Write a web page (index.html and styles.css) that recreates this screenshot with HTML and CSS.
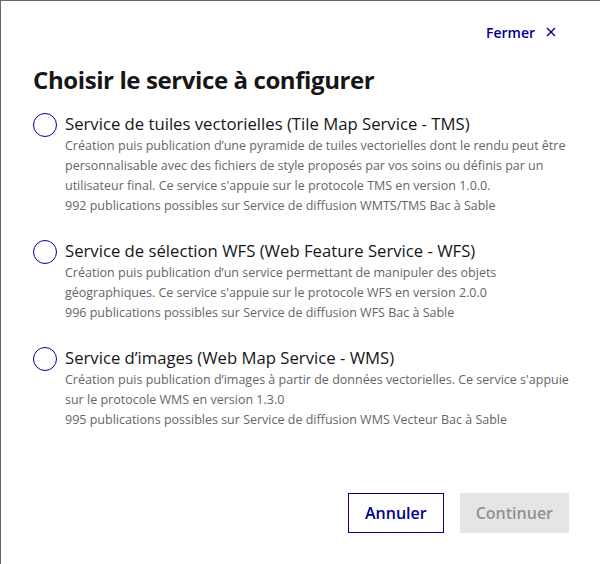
FILE: index.html
```html
<!DOCTYPE html>
<html lang="fr">
<head>
<meta charset="utf-8">
<title>Choisir le service à configurer</title>
<link rel="stylesheet" href="styles.css">
</head>
<body>
<div class="modal">
  <div class="modal-header">
    <button class="close-btn" type="button">Fermer <span class="close-x">
      <svg width="10" height="10" viewBox="0 0 10 10"><path d="M1 1 L9 9 M9 1 L1 9" stroke="#000091" stroke-width="1.4" fill="none"/></svg>
    </span></button>
  </div>
  <h1 class="title">Choisir le service à configurer</h1>
  <div class="options">
    <label class="option">
      <span class="radio"></span>
      <span class="option-body">
        <span class="option-label">Service de tuiles vectorielles (Tile Map Service - TMS)</span>
        <span class="hint">Création puis publication d’une pyramide de tuiles vectorielles dont le rendu peut être personnalisable avec des fichiers de style proposés par vos soins ou définis par un utilisateur final. Ce service s'appuie sur le protocole TMS en version 1.0.0.</span>
        <span class="hint">992 publications possibles sur Service de diffusion WMTS/TMS Bac à Sable</span>
      </span>
    </label>
    <label class="option">
      <span class="radio"></span>
      <span class="option-body">
        <span class="option-label">Service de sélection WFS (Web Feature Service - WFS)</span>
        <span class="hint">Création puis publication d’un service permettant de manipuler des objets géographiques. Ce service s'appuie sur le protocole WFS en version 2.0.0</span>
        <span class="hint">996 publications possibles sur Service de diffusion WFS Bac à Sable</span>
      </span>
    </label>
    <label class="option">
      <span class="radio"></span>
      <span class="option-body">
        <span class="option-label">Service d’images (Web Map Service - WMS)</span>
        <span class="hint">Création puis publication d’images à partir de données vectorielles. Ce service s'appuie sur le protocole WMS en version 1.3.0</span>
        <span class="hint">995 publications possibles sur Service de diffusion WMS Vecteur Bac à Sable</span>
      </span>
    </label>
  </div>
  <div class="footer">
    <button class="btn btn-secondary" type="button">Annuler</button>
    <button class="btn btn-disabled" type="button" disabled>Continuer</button>
  </div>
</div>
</body>
</html>
```
FILE: styles.css
```css
* { box-sizing: border-box; }
html, body { margin: 0; padding: 0; }
body {
  width: 600px;
  height: 564px;
  background: #fff;
  font-family: "Open Sans", "Noto Sans", sans-serif;
  color: #161616;
  overflow: hidden;
}
.modal {
  width: 600px;
  height: 564px;
  border-top: 1px solid #666;
  border-left: 1px solid #666;
  padding: 0 31px 0 32px;
  display: flex;
  flex-direction: column;
}
.modal-header {
  display: flex;
  justify-content: flex-end;
  padding-top: 15px;
  height: 48px;
}
.close-btn {
  background: none;
  border: none;
  padding: 0 13px 0 0;
  height: 32px;
  font-family: inherit;
  font-size: 14px;
  font-weight: 600;
  color: #000091;
  display: flex;
  align-items: center;
  gap: 11px;
  cursor: pointer;
}
.close-x { display: flex; align-items: center; }
.title {
  margin: 15px 0 17px;
  font-size: 24px;
  line-height: 32px;
  font-weight: 700;
  letter-spacing: -0.4px;
  color: #161616;
}
.options {
  display: flex;
  flex-direction: column;
  gap: 24px;
}
.option {
  display: flex;
  gap: 8px;
}
.radio {
  flex: none;
  width: 24px;
  height: 24px;
  border: 1px solid #000091;
  border-radius: 50%;
}
.option-body {
  display: flex;
  flex-direction: column;
}
.option-label {
  font-size: 16.7px;
  line-height: 24px;
  color: #161616;
  margin-top: -1px;
}
.hint {
  display: block;
  font-size: 12.5px;
  line-height: 20px;
  color: #666;
}
.footer {
  margin-top: auto;
  margin-bottom: 31px;
  display: flex;
  justify-content: flex-end;
  gap: 16px;
}
.btn {
  height: 40px;
  padding: 0 16px;
  font-family: inherit;
  font-size: 16px;
  font-weight: 600;
}
.btn-secondary {
  background: #fff;
  border: 1px solid #000091;
  color: #000091;
}
.btn-disabled {
  background: #e5e5e5;
  border: none;
  color: #929292;
}
```
